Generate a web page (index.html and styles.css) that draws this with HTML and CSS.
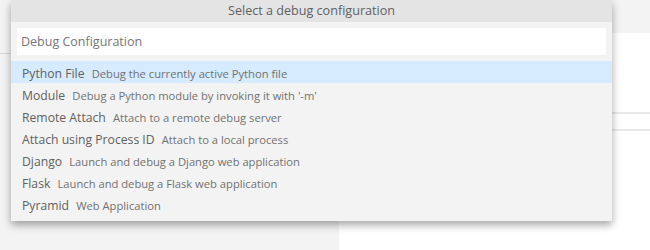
FILE: index.html
```html
<!DOCTYPE html>
<html lang="en">
  <head>
    <meta charset="UTF-8" />
    <title>Select a debug configuration</title>
    <link rel="stylesheet" href="styles.css">
  </head>

  <body>
    <div class="workbench">
      <div class="side-pane">
        <div class="side-header"></div>
      </div>
      <div class="main-pane">
        <div class="main-tabs"></div>
        <div class="main-body">
          <div class="rule"></div>
          <div class="rule"></div>
        </div>
      </div>

      <div class="quick-open">
        <div class="qo-title">Select a debug configuration</div>
        <div class="qo-input-wrap">
          <input class="qo-input" type="text" placeholder="Debug Configuration" />
        </div>
        <ul class="qo-list">
          <li class="qo-item selected">
            <span class="qo-label">Python File</span>
            <span class="qo-desc">Debug the currently active Python file</span>
          </li>
          <li class="qo-item">
            <span class="qo-label">Module</span>
            <span class="qo-desc">Debug a Python module by invoking it with '-m'</span>
          </li>
          <li class="qo-item">
            <span class="qo-label">Remote Attach</span>
            <span class="qo-desc">Attach to a remote debug server</span>
          </li>
          <li class="qo-item">
            <span class="qo-label">Attach using Process ID</span>
            <span class="qo-desc">Attach to a local process</span>
          </li>
          <li class="qo-item">
            <span class="qo-label">Django</span>
            <span class="qo-desc">Launch and debug a Django web application</span>
          </li>
          <li class="qo-item">
            <span class="qo-label">Flask</span>
            <span class="qo-desc">Launch and debug a Flask web application</span>
          </li>
          <li class="qo-item">
            <span class="qo-label">Pyramid</span>
            <span class="qo-desc">Web Application</span>
          </li>
        </ul>
      </div>
    </div>
  </body>
</html>
```

FILE: styles.css
```css
body {
  margin: 0;
  font-family: "Open Sans", "Noto Sans", sans-serif;
  background: #fff;
}
.workbench {
  position: relative;
  display: flex;
  width: 650px;
  height: 250px;
  overflow: hidden;
}
.side-pane {
  width: 339px;
  background: #f3f3f3;
}
.side-header {
  height: 53px;
  border-bottom: 1px solid #d7d7d7;
}
.main-pane {
  flex: 1;
  display: flex;
  flex-direction: column;
}
.main-tabs {
  height: 33px;
  background: #f3f3f3;
}
.main-body {
  padding-top: 79px;
}
.main-body .rule {
  height: 2px;
  background: #e8e8e8;
  margin-bottom: 15px;
}

/* quick pick overlay */
.quick-open {
  position: absolute;
  left: 11px;
  top: 0;
  width: 601px;
  background: #f3f3f3;
  box-shadow: 0 4px 8px rgba(0, 0, 0, 0.35);
  color: #616161;
}
.qo-title {
  height: 22px;
  line-height: 22px;
  background: #e4e4e4;
  text-align: center;
  font-size: 12.6px;
}
.qo-input-wrap {
  padding: 6px 6px 6px;
}
.qo-input {
  display: block;
  box-sizing: border-box;
  width: 100%;
  height: 27px;
  border: 0;
  outline: 0;
  padding: 0 4px;
  background: #fff;
  font-family: inherit;
  font-size: 12.5px;
  color: #616161;
}
.qo-input::placeholder {
  color: #767676;
}
.qo-list {
  list-style: none;
  margin: 0;
  padding: 0 0 6px;
}
.qo-item {
  height: 22px;
  line-height: 22px;
  padding-left: 11px;
  white-space: nowrap;
}
.qo-item.selected {
  background: #d6ebff;
}
.qo-label {
  font-size: 12.2px;
  color: #616161;
  margin-right: 3px;
}
.qo-desc {
  font-size: 11.2px;
  color: #717171;
}
```
